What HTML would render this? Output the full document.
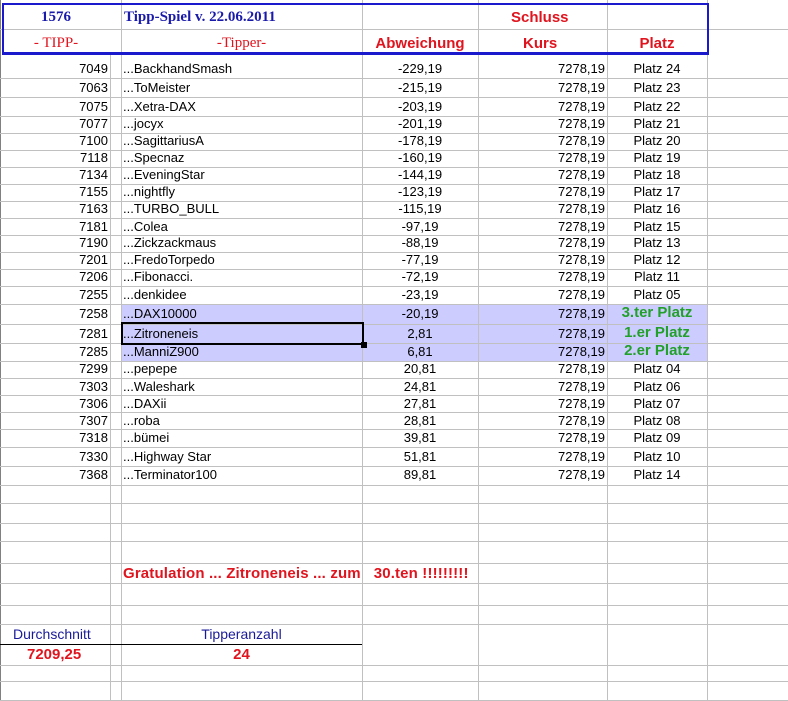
<!DOCTYPE html>
<html><head><meta charset="utf-8"><style>
*{margin:0;padding:0;box-sizing:border-box}
body{width:788px;height:701px;background:#fff;position:relative;overflow:hidden;font-family:"Liberation Sans",Arial,sans-serif;font-size:13px;color:#000}
.v{position:absolute;top:0;width:1px;height:701px;background:#c0c0c0}
.h{position:absolute;left:0;width:788px;height:1px;background:#c0c0c0}
.t{position:absolute;white-space:nowrap;line-height:16px}
.r{text-align:right}
.c{text-align:center}
.hl{position:absolute;left:121px;width:586px;background:#ccccff}
.hd{font-weight:bold;color:#e0141e;font-size:15px}
.sr{font-family:"Liberation Serif",serif;font-weight:bold;font-size:15px}
.g{color:#22a02a;font-weight:bold;font-size:15px}
</style></head><body>
<div class="hl" style="top:304px;height:57px"></div>

<div class="v" style="left:0;background:#808080"></div>
<div class="v" style="left:110px;top:55px;height:646px"></div>
<div class="v" style="left:121px"></div>
<div class="v" style="left:362px"></div>
<div class="v" style="left:478px"></div>
<div class="v" style="left:607px"></div>
<div class="v" style="left:707px"></div>

<div class="h" style="top:29px"></div>
<div class="h" style="top:78px"></div><div class="h" style="top:97px"></div><div class="h" style="top:116px"></div>
<div class="h" style="top:133px"></div><div class="h" style="top:150px"></div><div class="h" style="top:167px"></div>
<div class="h" style="top:184px"></div><div class="h" style="top:201px"></div><div class="h" style="top:218px"></div>
<div class="h" style="top:235px"></div><div class="h" style="top:252px"></div><div class="h" style="top:269px"></div>
<div class="h" style="top:286px"></div><div class="h" style="top:304px"></div><div class="h" style="top:324px"></div>
<div class="h" style="top:343px"></div><div class="h" style="top:361px"></div><div class="h" style="top:378px"></div>
<div class="h" style="top:395px"></div><div class="h" style="top:412px"></div><div class="h" style="top:429px"></div>
<div class="h" style="top:447px"></div><div class="h" style="top:466px"></div><div class="h" style="top:485px"></div>
<div class="h" style="top:503px"></div><div class="h" style="top:523px"></div><div class="h" style="top:541px"></div>
<div class="h" style="top:563px"></div><div class="h" style="top:583px"></div><div class="h" style="top:605px"></div>
<div class="h" style="top:624px"></div><div class="h" style="top:665px"></div><div class="h" style="top:681px"></div>
<div class="h" style="top:700px"></div>
<div style="position:absolute;left:0;top:644px;width:362px;height:1px;background:#000"></div>

<div style="position:absolute;left:2px;top:3px;width:707px;height:52px;border:2px solid #1a1acc;border-bottom-width:3px"></div>

<div class="t sr c" style="left:2px;width:108px;top:9px;color:#1a1aaa">1576</div>
<div class="t sr" style="left:124px;top:9px;color:#1a1aaa">Tipp-Spiel v. 22.06.2011</div>
<div class="t sr c" style="left:2px;width:108px;top:35px;color:#e0141e;font-weight:normal">- TIPP-</div>
<div class="t sr c" style="left:121px;width:241px;top:35px;color:#e0141e;font-weight:normal">-Tipper-</div>
<div class="t hd" style="left:511px;top:10px">Schluss</div>
<div class="t hd c" style="left:362px;width:116px;top:36px">Abweichung</div>
<div class="t hd" style="left:523px;top:36px">Kurs</div>
<div class="t hd c" style="left:607px;width:100px;top:36px">Platz</div>

<div id="rows"></div>
<script>
var d=[["7049","BackhandSmash","-229,19","Platz 24",69],["7063","ToMeister","-215,19","Platz 23",88],["7075","Xetra-DAX","-203,19","Platz 22",107],["7077","jocyx","-201,19","Platz 21",124],["7100","SagittariusA","-178,19","Platz 20",141],["7118","Specnaz","-160,19","Platz 19",158],["7134","EveningStar","-144,19","Platz 18",175],["7155","nightfly","-123,19","Platz 17",192],["7163","TURBO_BULL","-115,19","Platz 16",209],["7181","Colea","-97,19","Platz 15",227],["7190","Zickzackmaus","-88,19","Platz 13",243],["7201","FredoTorpedo","-77,19","Platz 12",260],["7206","Fibonacci.","-72,19","Platz 11",277],["7255","denkidee","-23,19","Platz 05",295],["7258","DAX10000","-20,19","3.ter Platz",314],["7281","Zitroneneis","2,81","1.er Platz",334],["7285","ManniZ900","6,81","2.er Platz",352],["7299","pepepe","20,81","Platz 04",369],["7303","Waleshark","24,81","Platz 06",387],["7306","DAXii","27,81","Platz 07",404],["7307","roba","28,81","Platz 08",421],["7318","bümei","39,81","Platz 09",438],["7330","Highway Star","51,81","Platz 10",457],["7368","Terminator100","89,81","Platz 14",475]];
var h="";d.forEach(function(r){var t=r[4]-8;var g=r[3].indexOf("er Platz")>0;
h+='<div class="t r" style="left:0;width:108px;top:'+t+'px">'+r[0]+'</div>';
h+='<div class="t" style="left:123px;top:'+t+'px">...'+r[1]+'</div>';
h+='<div class="t c" style="left:362px;width:116px;top:'+t+'px">'+r[2]+'</div>';
h+='<div class="t r" style="left:478px;width:127px;top:'+t+'px">7278,19</div>';
h+='<div class="t c'+(g?' g':'')+'" style="left:607px;width:100px;top:'+(g?t-1:t)+'px">'+r[3]+'</div>';});
document.getElementById("rows").innerHTML=h;
</script>

<div style="position:absolute;left:121px;top:322px;width:243px;height:23px;border:2px solid #000"></div>
<div style="position:absolute;left:361px;top:342px;width:6px;height:6px;background:#000"></div>

<div class="t hd" style="left:123px;top:566px;font-size:15px;letter-spacing:0.15px">Gratulation ... Zitroneneis ... zum &nbsp; 30.ten !!!!!!!!!</div>
<div class="t" style="left:13px;top:626px;color:#1a1a99;font-size:14px">Durchschnitt</div>
<div class="t c" style="left:121px;width:241px;top:626px;color:#1a1a99;font-size:14px">Tipperanzahl</div>
<div class="t hd" style="left:27px;top:647px">7209,25</div>
<div class="t hd c" style="left:121px;width:241px;top:647px">24</div>
</body></html>
